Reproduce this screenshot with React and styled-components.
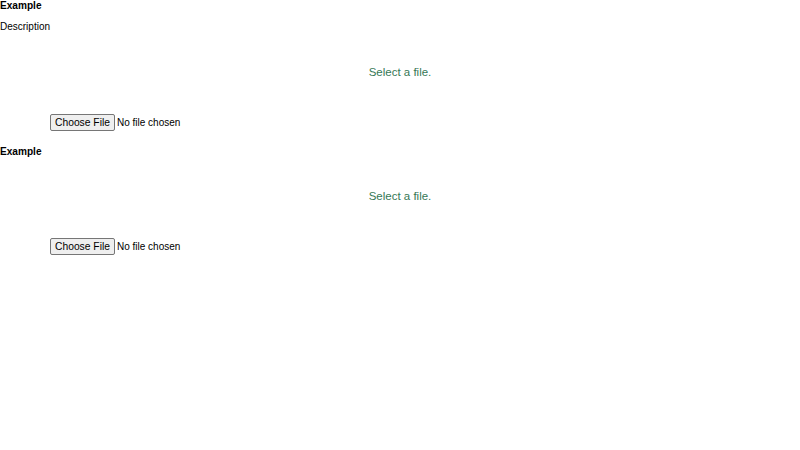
import React from "react";
import styled, { createGlobalStyle } from "styled-components";

const GlobalStyle = createGlobalStyle`
  html, body {
    margin: 0;
    padding: 0;
    background: #ffffff;
  }
  body {
    font-family: "Liberation Sans", Arial, sans-serif;
    color: #000000;
  }
`;

const Page = styled.div`
  display: flex;
  flex-direction: column;
  gap: 15px;
  width: 800px;
`;

const Section = styled.section`
  display: flex;
  flex-direction: column;
`;

const Title = styled.h2`
  margin: 0;
  font-size: 10.1px;
  line-height: 12px;
  font-weight: 700;
`;

const Description = styled.p`
  margin: 9px 0 0;
  font-size: 10px;
  line-height: 12px;
`;

const Viewer = styled.div`
  display: flex;
  justify-content: center;
  margin-top: ${({ $gap }) => $gap}px;
  font-size: 11.5px;
  line-height: 12px;
  color: #367856;
`;

const InputRow = styled.div`
  display: flex;
  padding-left: 50px;
  margin-top: 36px;
`;

const FileInput = styled.input`
  font-family: "Liberation Sans", Arial, sans-serif;
  font-size: 10px;
  height: 17px;
  line-height: 17px;
  padding: 0;
  margin: 0;

  &::file-selector-button {
    font-family: inherit;
    font-size: 10.3px;
    height: 17px;
    padding: 0 4px;
    margin-right: 2px;
    background: #efefef;
    border: 1px solid #767676;
    border-radius: 2px;
  }
`;

const Example = ({ title, description }) => (
  <Section>
    <Title>{title}</Title>
    {description && <Description>{description}</Description>}
    <Viewer $gap={description ? 33 : 32}>Select a file.</Viewer>
    <InputRow>
      <FileInput type="file" />
    </InputRow>
  </Section>
);

const App = () => (
  <>
    <GlobalStyle />
    <Page>
      <Example title="Example" description="Description" />
      <Example title="Example" />
    </Page>
  </>
);

export default App;
